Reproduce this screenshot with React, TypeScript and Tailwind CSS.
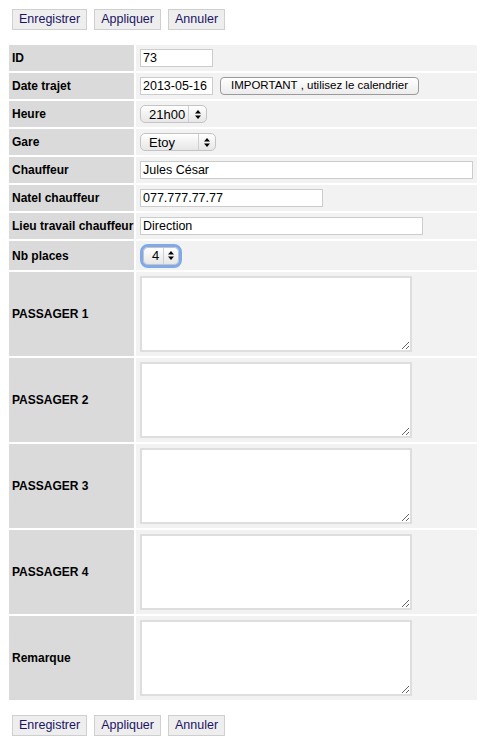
import React from "react";

const font = "font-['Liberation_Sans',Arial,Helvetica,sans-serif]";

const Buttons = () => (
  <div className="flex gap-[7px] pl-[12px]">
    {["Enregistrer", "Appliquer", "Annuler"].map((b) => (
      <button
        key={b}
        className="h-[21px] px-[6px] bg-[#eeeeee] border border-[#cfcfcf] text-[#1b1464] text-[12.5px] leading-none"
      >
        {b}
      </button>
    ))}
  </div>
);

const Arrows = () => (
  <svg width="6" height="9" viewBox="0 0 6 9" className="text-black">
    <path d="M3 0 L6 3.5 L0 3.5 Z" fill="currentColor" />
    <path d="M3 9 L6 5.5 L0 5.5 Z" fill="currentColor" />
  </svg>
);

type SelProps = { value: string; width: string; textW: string; focus?: boolean };

const FakeSelect = ({ value, width, textW, focus }: SelProps) => (
  <div
    className={`flex items-stretch h-[18px] ${width} rounded-[5px] border border-[#c4c4c4] bg-gradient-to-b from-[#ffffff] to-[#e6e6e6] text-[13px] leading-none text-black ${
      focus ? "outline outline-[3px] outline-[#7fa9e8]" : ""
    }`}
  >
    <div className={`flex items-center pl-[8px] ${textW} border-r border-[#cfcfcf]`}>{value}</div>
    <div className="flex flex-1 items-center justify-center">
      <Arrows />
    </div>
  </div>
);

const Input = ({ value, w }: { value: string; w: string }) => (
  <input
    readOnly
    value={value}
    className={`h-[18px] ${w} bg-white border border-[#cccccc] px-[2px] text-[12.5px] text-black outline-none`}
  />
);

const Area = () => (
  <textarea className="h-[76px] w-[272px] bg-white border-2 border-[#dedede] resize outline-none" />
);

type Row = { label: string; h: string; content: React.ReactNode };

const rows: Row[] = [
  { label: "ID", h: "h-[26px]", content: <Input value="73" w="w-[73px]" /> },
  {
    label: "Date trajet",
    h: "h-[26px]",
    content: (
      <div className="flex items-center gap-[7px]">
        <Input value="2013-05-16" w="w-[73px]" />
        <button className="h-[18px] w-[199px] rounded-[4px] border border-[#9a9a9a] bg-gradient-to-b from-[#ffffff] to-[#ececec] text-[11.5px] leading-none text-black">
          IMPORTANT , utilisez le calendrier
        </button>
      </div>
    ),
  },
  { label: "Heure", h: "h-[26px]", content: <FakeSelect value="21h00" width="w-[67px]" textW="w-[48px]" /> },
  { label: "Gare", h: "h-[26px]", content: <FakeSelect value="Etoy" width="w-[76px]" textW="w-[58px]" /> },
  { label: "Chauffeur", h: "h-[26px]", content: <Input value="Jules César" w="w-[333px]" /> },
  { label: "Natel chauffeur", h: "h-[26px]", content: <Input value="077.777.77.77" w="w-[183px]" /> },
  { label: "Lieu travail chauffeur", h: "h-[26px]", content: <Input value="Direction" w="w-[283px]" /> },
  {
    label: "Nb places",
    h: "h-[29px]",
    content: (
      <div className="pl-[3px]">
        <FakeSelect value="4" width="w-[36px]" textW="w-[20px]" focus />
      </div>
    ),
  },
  { label: "PASSAGER 1", h: "h-[84px]", content: <Area /> },
  { label: "PASSAGER 2", h: "h-[84px]", content: <Area /> },
  { label: "PASSAGER 3", h: "h-[84px]", content: <Area /> },
  { label: "PASSAGER 4", h: "h-[84px]", content: <Area /> },
  { label: "Remarque", h: "h-[84px]", content: <Area /> },
];

export default function App() {
  return (
    <div className={`${font} bg-white min-h-[744px] w-[490px] pt-[9px]`}>
      <Buttons />
      <div className="grid grid-cols-[125px_341px] gap-[2px] ml-[9px] mt-[15px]">
        {rows.map((r) => (
          <React.Fragment key={r.label}>
            <div className={`${r.h} flex items-center bg-[#dadada] pl-[3px] text-[12px] font-bold text-black`}>
              {r.label}
            </div>
            <div className={`${r.h} flex items-center bg-[#f2f2f2] pl-[4px]`}>{r.content}</div>
          </React.Fragment>
        ))}
      </div>
      <div className="mt-[15px]">
        <Buttons />
      </div>
    </div>
  );
}
